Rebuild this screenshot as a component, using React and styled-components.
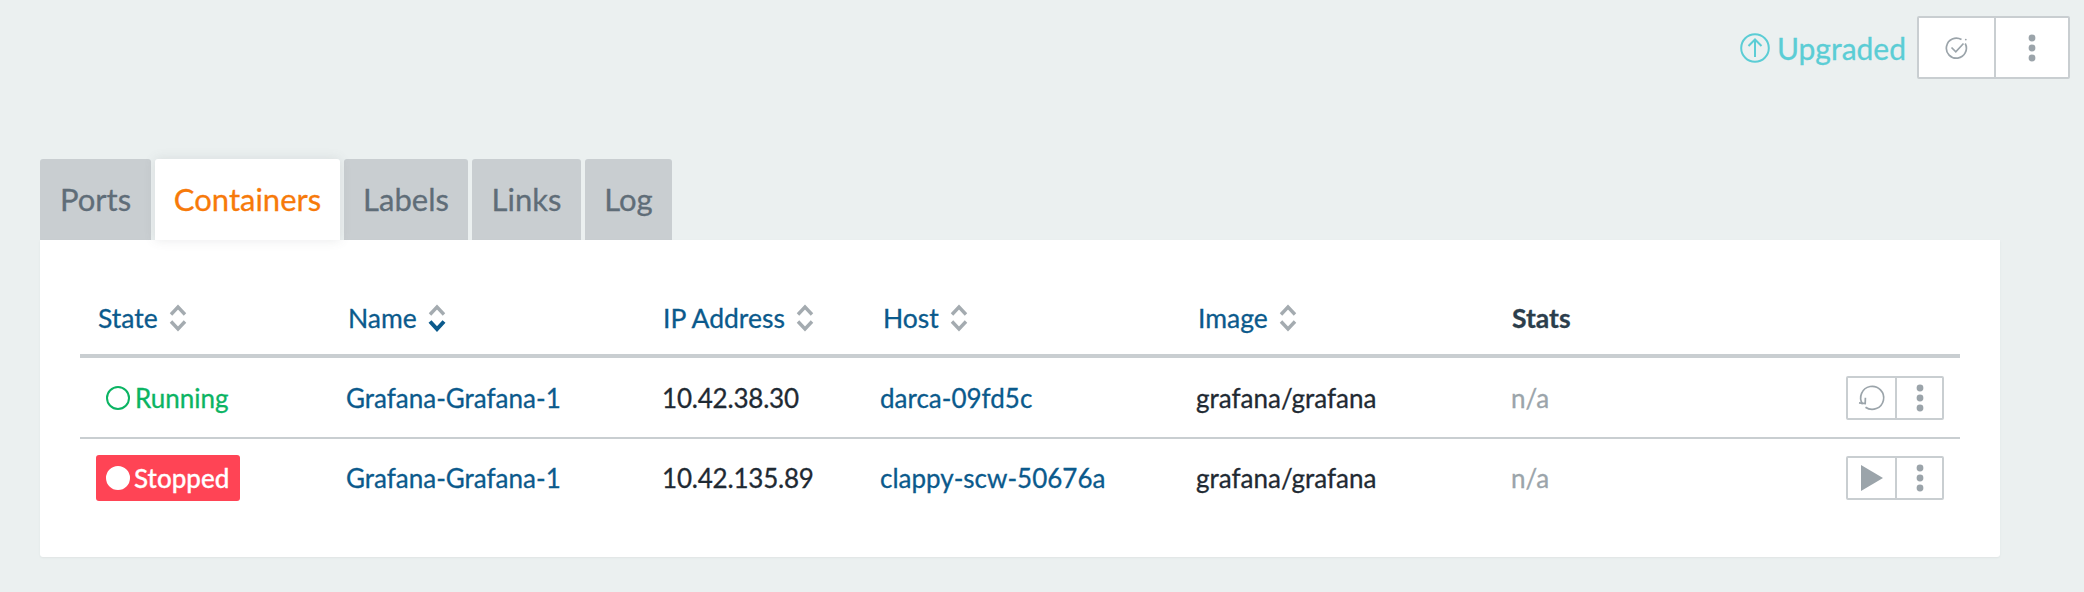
import React from "react";
import styled, { createGlobalStyle } from "styled-components";

const GRID = "266px 316px 218px 316px 315px 200px 1fr";

const GlobalStyle = createGlobalStyle`
  html, body {
    margin: 0;
    background: #ebf0f0;
    font-family: Lato, "Open Sans", sans-serif;
    -webkit-text-stroke: 0.3px;
  }
`;
const PageEl = styled.div`
  width: 2084px;
  height: 592px;
  overflow: hidden;
  background: #ebf0f0;
`;
const HeaderEl = styled.div`
  display: flex;
  justify-content: flex-end;
  align-items: center;
  height: 63px;
  padding: 16px 14px 0 0;
`;
const UpgradedEl = styled.div`
  display: flex;
  align-items: center;
  gap: 7px;
  margin-right: 11px;
  color: #5bcdd5;
  font-size: 30px;
  line-height: 1;
`;
const BtnGroupEl = styled.div`
  display: flex;
  height: ${(p) => (p.$small ? "44px" : "63px")};
  box-sizing: border-box;
  background: #fff;
  border: 2px solid #c9ced1;
  border-radius: 2px;
`;
const BtnEl = styled.div`
  display: flex;
  align-items: center;
  justify-content: center;
  width: ${(p) => p.$width}px;
  & + & {
    border-left: 2px solid #c9ced1;
  }
`;
const TabsEl = styled.div`
  display: flex;
  gap: 4px;
  margin: 80px 0 0 40px;
`;
const TabEl = styled.div`
  position: relative;
  box-sizing: border-box;
  width: ${(p) => p.$width}px;
  height: 81px;
  display: flex;
  align-items: center;
  justify-content: center;
  border-radius: 3px 3px 0 0;
  font-size: 31px;
  padding-bottom: 2px;
  background: ${(p) => (p.$active ? "#fff" : "#c9ced1")};
  color: ${(p) => (p.$active ? "#f77a0a" : "#5f6d78")};
  box-shadow: ${(p) => (p.$active ? "0 0 12px rgba(90, 100, 105, 0.14)" : "none")};
  z-index: ${(p) => (p.$active ? 1 : 0)};
`;
const PanelEl = styled.div`
  position: relative;
  box-sizing: border-box;
  width: 1960px;
  height: 317px;
  margin-left: 40px;
  padding: 0 40px;
  background: #fff;
  border-radius: 0 0 3px 3px;
  box-shadow: 0 1px 2px rgba(90, 100, 105, 0.08);
`;
const TableHeadEl = styled.div`
  display: grid;
  grid-template-columns: ${GRID};
  align-items: center;
  height: 118px;
  box-sizing: border-box;
  padding-top: 42px;
  border-bottom: 4px solid #c9ced1;
`;
const HeadCellEl = styled.div`
  display: flex;
  align-items: center;
  gap: 11px;
  padding-left: ${(p) => p.$pad || 2}px;
  font-size: 26.5px;
  color: ${(p) => (p.$plain ? "#2c3e4c" : "#0b5a8c")};
  font-weight: ${(p) => (p.$plain ? 700 : 400)};
`;
const RowEl = styled.div`
  display: grid;
  grid-template-columns: ${GRID};
  align-items: center;
  height: ${(p) => (p.$last ? 80 : 81)}px;
  box-sizing: border-box;
  padding-bottom: ${(p) => (p.$last ? 2 : 0)}px;
  font-size: 26px;
  color: #1f2a33;
  border-bottom: ${(p) => (p.$last ? "none" : "2px solid #c9ced1")};
`;
const NameLinkEl = styled.a`
  color: #0b5a8c;
`;
const IpEl = styled.span`
  letter-spacing: -0.2px;
`;
const MutedEl = styled.span`
  color: #9ba4aa;
`;
const ActionsEl = styled.div`
  display: flex;
  justify-content: flex-end;
  padding-right: 16px;
`;
const RunningEl = styled.div`
  display: flex;
  align-items: center;
  gap: 5px;
  padding-left: 26px;
  color: #0bb463;
`;
const StoppedEl = styled.div`
  display: inline-flex;
  align-items: center;
  justify-self: start;
  box-sizing: border-box;
  gap: 4px;
  width: 144px;
  height: 46px;
  margin-left: 16px;
  padding-left: 10px;
  background: #ff4455;
  color: #fff;
  border-radius: 3px;
  font-weight: 500;
`;
const RingEl = styled.span`
  box-sizing: border-box;
  width: 24px;
  height: 24px;
  border-radius: 50%;
  border: ${(p) => (p.$solid ? "12px solid #fff" : "2px solid #0bb463")};
`;

const Dots = () => (
  <svg width="14" height="36" viewBox="0 0 14 36" fill="#9ba4aa">
    <circle cx="7" cy="8" r="3.4" />
    <circle cx="7" cy="18" r="3.4" />
    <circle cx="7" cy="28" r="3.4" />
  </svg>
);

const SortIcon = ({ active }) => (
  <svg width="18" height="28" viewBox="0 0 18 28" fill="none" strokeWidth="3.4">
    <path d="M2 10.5 L9 3 L16 10.5" stroke="#a4abb0" />
    <path
      d="M2 17.5 L9 25 L16 17.5"
      stroke={active ? "#0b5a8c" : "#a4abb0"}
      strokeWidth={active ? 4 : 3.4}
    />
  </svg>
);

const UpgradeIcon = () => (
  <svg width="30" height="30" viewBox="0 0 30 30" fill="none" stroke="#5bcdd5" strokeWidth="2">
    <circle cx="15" cy="15" r="13.8" />
    <path d="M15 24 V7 M8.5 13 L15 6.5 L21.5 13" />
  </svg>
);

const CheckIcon = () => (
  <svg width="24" height="24" viewBox="0 0 24 24" fill="none" stroke="#9ba4aa">
    <path d="M20.2 7.5 A10 10 0 1 1 16.5 3.6" strokeWidth="1.7" />
    <path d="M6.5 11.5 L10.8 15.8 L18.5 7.5" strokeWidth="1.7" />
    <circle cx="20.8" cy="3.6" r="0.9" fill="#9ba4aa" stroke="none" />
  </svg>
);

const RestartIcon = () => (
  <svg width="28" height="28" viewBox="0 0 28 28" fill="none" stroke="#9ba4aa" strokeWidth="1.7">
    <path d="M4.6 20.2 A11.5 11.5 0 1 1 7.5 23.2" />
    <path d="M1 18.8 L7.2 19.6 L7.4 13.8" />
  </svg>
);

const PlayIcon = () => (
  <svg width="24" height="28" viewBox="0 0 24 28">
    <path d="M1 1 L23 14 L1 27 Z" fill="#9ba4aa" />
  </svg>
);

const COLUMNS = [
  { label: "State", pad: 18 },
  { label: "Name", pad: 2, active: true },
  { label: "IP Address", pad: 1 },
  { label: "Host", pad: 3 },
  { label: "Image", pad: 2 },
];

const ROWS = [
  { name: "Grafana-Grafana-1", ip: "10.42.38.30", host: "darca-09fd5c", running: true },
  { name: "Grafana-Grafana-1", ip: "10.42.135.89", host: "clappy-scw-50676a" },
];

const TABS = [
  { label: "Ports", width: 111 },
  { label: "Containers", width: 185, active: true },
  { label: "Labels", width: 124 },
  { label: "Links", width: 109 },
  { label: "Log", width: 87 },
];

export default function App() {
  return (
    <PageEl>
      <GlobalStyle />
      <HeaderEl>
        <UpgradedEl>
          <UpgradeIcon />
          Upgraded
        </UpgradedEl>
        <BtnGroupEl>
          <BtnEl $width={75}>
            <CheckIcon />
          </BtnEl>
          <BtnEl $width={72}>
            <Dots />
          </BtnEl>
        </BtnGroupEl>
      </HeaderEl>
      <TabsEl>
        {TABS.map((t) => (
          <TabEl key={t.label} $width={t.width} $active={t.active}>
            {t.label}
          </TabEl>
        ))}
      </TabsEl>
      <PanelEl>
        <TableHeadEl>
          {COLUMNS.map((c) => (
            <HeadCellEl key={c.label} $pad={c.pad}>
              {c.label}
              <SortIcon active={c.active} />
            </HeadCellEl>
          ))}
          <HeadCellEl $plain $pad={1}>
            Stats
          </HeadCellEl>
        </TableHeadEl>
        {ROWS.map((r, i) => (
          <RowEl key={r.ip} $last={i === ROWS.length - 1}>
            {r.running ? (
              <RunningEl>
                <RingEl />
                Running
              </RunningEl>
            ) : (
              <StoppedEl>
                <RingEl $solid />
                Stopped
              </StoppedEl>
            )}
            <NameLinkEl>{r.name}</NameLinkEl>
            <IpEl>{r.ip}</IpEl>
            <NameLinkEl>{r.host}</NameLinkEl>
            <span>grafana/grafana</span>
            <MutedEl>n/a</MutedEl>
            <ActionsEl>
              <BtnGroupEl $small>
                <BtnEl $width={47}>{r.running ? <RestartIcon /> : <PlayIcon />}</BtnEl>
                <BtnEl $width={45}>
                  <Dots />
                </BtnEl>
              </BtnGroupEl>
            </ActionsEl>
          </RowEl>
        ))}
      </PanelEl>
    </PageEl>
  );
}
